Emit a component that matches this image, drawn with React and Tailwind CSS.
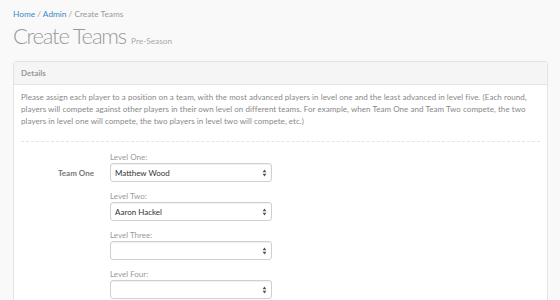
import React from "react";

function Chevrons() {
  return (
    <svg width="5" height="8" viewBox="0 0 5 8" className="text-[#555]">
      <path d="M2.5 0.6 L4.4 3.2 L0.6 3.2 Z" fill="currentColor" />
      <path d="M2.5 7.4 L4.4 4.8 L0.6 4.8 Z" fill="currentColor" />
    </svg>
  );
}

function Field({ label, value }) {
  return (
    <div className="mb-[9px]">
      <div className="text-[8px] leading-[11px] text-[#999]">{label}</div>
      <div className="w-[162px] h-[19px] rounded-[3px] border border-[#d0d0d0] bg-white flex items-center justify-between pl-[4px] pr-[4px] text-[8px] text-[#333] shadow-[inset_0_1px_1px_rgba(0,0,0,0.06)]">
        <span>{value}</span>
        <Chevrons />
      </div>
    </div>
  );
}

export default function App() {
  return (
    <div
      className="w-[560px] h-[300px] overflow-hidden bg-[#f9f9f9]"
      style={{ fontFamily: 'Lato, "Open Sans", "Liberation Sans", sans-serif' }}
    >
      <div className="px-[13px] pt-[9px]">
        <div className="text-[8.3px] leading-[10px] text-[#999]">
          <span className="text-[#3d88c6]">Home</span> /{" "}
          <span className="text-[#3d88c6]">Admin</span> / Create Teams
        </div>
        <div className="mt-[4px] h-[26px] flex items-baseline gap-[5px]">
          <span className="text-[22px] leading-[26px] font-light tracking-[-1.2px] text-[#9a9a9a]">Create Teams</span>
          <span className="text-[8.3px] text-[#aaa]">Pre-Season</span>
        </div>
        <div className="mt-[12px] w-[535px] border border-[#e3e3e3] rounded-[3px] bg-white">
          <div className="h-[23px] bg-[#f5f5f5] border-b border-[#e3e3e3] flex items-center px-[7px] text-[8px] font-bold text-[#999]">
            Details
          </div>
          <div className="px-[7px] pt-[6px]">
            <p className="text-[8px] leading-[12px] tracking-[0.05px] text-[#888]">
              Please assign each player to a position on a team, with the most advanced players in level one and the least advanced in level five. (Each round, players will compete against other players in their own level on different teams. For example, when Team One and Team Two compete, the two players in level one will compete, the two players in level two will compete, etc.)
            </p>
            <div className="mt-[14px] border-t border-dashed border-[#e5e5e5]" />
            <div className="flex pt-[10px] gap-[16px]">
              <div className="w-[73px] mt-[11px] h-[19px] flex items-center justify-end text-[8px] font-bold text-[#777]">
                Team One
              </div>
              <div>
                <Field label="Level One:" value="Matthew Wood" />
                <Field label="Level Two:" value="Aaron Hackel" />
                <Field label="Level Three:" value="" />
                <Field label="Level Four:" value="" />
              </div>
            </div>
          </div>
        </div>
      </div>
    </div>
  );
}
